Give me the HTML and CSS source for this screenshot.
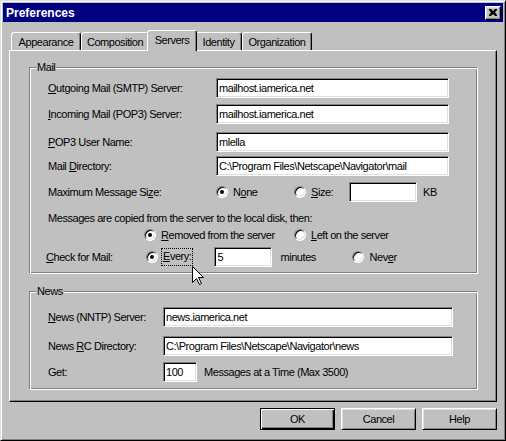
FILE: index.html
```html
<!DOCTYPE html>
<html>
<head>
<meta charset="utf-8">
<link rel="stylesheet" href="styles.css">
</head>
<body>
<div class="window">
  <div class="titlebar">
    <span class="title">Preferences</span>
    <span class="close"><svg width="8" height="7" viewBox="0 0 8 7"><path d="M0 0h2l2 2 2-2h2v1l-2 2.5 2 2.5v1h-2l-2-2-2 2h-2v-1l2-2.5-2-2.5z" fill="#000"/></svg></span>
  </div>
  <div class="content">
    <div class="tabs">
      <div class="tab t-app">Appearance</div>
      <div class="tab t-comp">Composition</div>
      <div class="tab t-serv sel">Servers</div>
      <div class="tab t-id">Identity</div>
      <div class="tab t-org">Organization</div>
    </div>
    <div class="panel">
      <div class="group mail">
        <div class="legend">Mail</div>
        <div class="row m1"><span class="label"><u>O</u>utgoing Mail (SMTP) Server:</span><span class="field w233">mailhost.iamerica.net</span></div>
        <div class="row m2"><span class="label"><u>I</u>ncoming Mail (POP3) Server:</span><span class="field w233">mailhost.iamerica.net</span></div>
        <div class="row m3"><span class="label"><u>P</u>OP3 User Name:</span><span class="field w233">mlella</span></div>
        <div class="row m4"><span class="label">Mail <u>D</u>irectory:</span><span class="field w233">C:\Program Files\Netscape\Navigator\mail</span></div>
        <div class="row m5">
          <span class="label">Maximum Message Si<u>z</u>e:</span>
          <span class="opt o-none"><span class="radio on"></span>N<u>o</u>ne</span>
          <span class="opt o-size"><span class="radio"></span><u>S</u>ize:</span>
          <span class="field w68"></span>
          <span class="kb">KB</span>
        </div>
        <div class="row m6 text">Messages are copied from the server to the local disk, then:</div>
        <div class="row m7 text">
          <span class="opt o-rem"><span class="radio on"></span><u>R</u>emoved from the server</span>
          <span class="opt"><span class="radio"></span><u>L</u>eft on the server</span>
        </div>
        <div class="row m8">
          <span class="label l-check"><u>C</u>heck for Mail:</span>
          <span class="opt"><span class="radio on r-every"></span><span class="focus"><u>E</u>very:</span></span>
          <span class="field w58 f-every">5</span>
          <span class="minutes">minutes</span>
          <span class="opt"><span class="radio"></span>Nev<u>e</u>r</span>
        </div>
      </div>
      <div class="group news">
        <div class="legend">News</div>
        <div class="row n1"><span class="nlabel"><u>N</u>ews (NNTP) Server:</span><span class="field w290">news.iamerica.net</span></div>
        <div class="row n2"><span class="nlabel">News <u>R</u>C Directory:</span><span class="field w290">C:\Program Files\Netscape\Navigator\news</span></div>
        <div class="row n3"><span class="nlabel">Get:</span><span class="field w34">100</span><span class="get-text">Messages at a Time (Max 3500)</span></div>
      </div>
    </div>
    <div class="buttons">
      <span class="btn default">OK</span>
      <span class="btn">Cancel</span>
      <span class="btn">Help</span>
    </div>
  </div>
  <svg class="cursor" width="13" height="20" viewBox="0 0 13 20"><path d="M0.5 0.5V16.5L4.5 12.5L7.5 18.5L9.5 17.5L6.5 11.5H11.5Z" fill="#fff" stroke="#000" stroke-width="1"/></svg>
</div>
</body>
</html>
```
FILE: styles.css
```css
* { box-sizing: border-box; }
body {
  margin: 0;
  font-family: "Liberation Sans", Arial, sans-serif;
  font-size: 11px;
  letter-spacing: -0.45px;
  color: #000;
}
.window {
  position: relative;
  width: 506px;
  height: 441px;
  background: #c0c0c0;
  border: 1px solid;
  border-color: #dfdfdf #000 #000 #dfdfdf;
  box-shadow: inset 1px 1px #fff, inset -1px -1px #808080;
  padding: 2px;
}
.titlebar {
  height: 19px;
  background: #000080;
  display: flex;
  align-items: center;
  justify-content: space-between;
  padding: 0 2px 0 3px;
}
.title {
  color: #fff;
  font-weight: bold;
  font-size: 12px;
  letter-spacing: 0;
}
.close {
  width: 16px;
  height: 14px;
  background: #c0c0c0;
  border: 1px solid;
  border-color: #fff #000 #000 #fff;
  box-shadow: inset -1px -1px #808080, inset 1px 1px #dfdfdf;
  display: flex;
  align-items: center;
  justify-content: center;
}
.close svg { display: block; }
.content { padding: 8px 6px 0 6px; }
.tabs {
  display: flex;
  align-items: flex-end;
  height: 20px;
  padding-left: 2px;
}
.tab {
  height: 18px;
  border: 1px solid;
  border-bottom: none;
  border-color: #fff #000 transparent #fff;
  border-radius: 3px 3px 0 0;
  box-shadow: inset -1px 0 #808080;
  display: flex;
  align-items: center;
  justify-content: center;
  background: #c0c0c0;
  white-space: nowrap;
}
.tab.sel {
  height: 21px;
  margin: 0 -2px -1px;
  position: relative;
  z-index: 1;
  padding-bottom: 2px;
}
.t-app { width: 70px; }
.t-comp { width: 68px; }
.t-serv { width: 50px; }
.t-id { width: 47px; }
.t-org { width: 70px; }
.panel {
  height: 352px;
  border: 1px solid;
  border-color: #fff #000 #000 #fff;
  box-shadow: inset -1px -1px #808080;
  padding: 16px 18px 0 19px;
}
.group {
  border: 1px solid;
  border-color: #808080 #fff #fff #808080;
  box-shadow: inset 1px 1px #fff, inset -1px -1px #808080;
  padding: 0 0 0 18px;
}
.mail { height: 207px; }
.news { height: 99px; margin-top: 17px; }
.legend {
  width: fit-content;
  margin: -7px 0 0 -12px;
  padding: 0 1px;
  line-height: 13px;
  background: #c0c0c0;
}
.row {
  display: flex;
  align-items: center;
  height: 20px;
  white-space: nowrap;
}
.row.text { height: 16px; }
.m1 { margin-top: 4px; }
.m2 { margin-top: 6px; }
.m3 { margin-top: 8px; }
.m4 { margin-top: 4px; }
.m5 { margin-top: 6px; }
.m6 { margin-top: 8px; }
.m7 { margin-top: 1px; padding-left: 96px; }
.m8 { margin-top: 4px; }
.n1 { margin-top: 9px; }
.n2 { margin-top: 9px; }
.n3 { margin-top: 6px; }
.label { width: 168px; }
.l-check { width: 100px; margin-left: -2px; }
.nlabel { width: 115px; }
.field {
  height: 20px;
  background: #fff;
  border: 1px solid;
  border-color: #808080 #fff #fff #808080;
  box-shadow: inset 1px 1px #000, inset -1px -1px #dfdfdf;
  padding: 0 2px;
  display: flex;
  align-items: center;
  white-space: nowrap;
  overflow: hidden;
}
.w233 { width: 233px; }
.w68 { width: 68px; }
.w58 { width: 58px; }
.w290 { width: 290px; }
.w34 { width: 34px; }
.opt {
  display: flex;
  align-items: center;
}
.o-none { width: 78px; }
.o-size { width: 55px; }
.o-rem { width: 150px; }
.radio {
  width: 12px;
  height: 12px;
  border-radius: 50%;
  background: #fff;
  border: 1px solid;
  border-color: #808080 #fff #fff #808080;
  box-shadow: inset 1px 1px #000, inset -1px -1px #dfdfdf;
  margin-right: 5px;
  display: flex;
  align-items: center;
  justify-content: center;
  flex: none;
}
.radio.on::after {
  content: "";
  width: 4px;
  height: 4px;
  border-radius: 50%;
  background: #000;
}
.r-every { margin-right: 3px; }
.focus {
  border: 1px dotted #000;
  padding: 1px 1px 2px;
  line-height: 13px;
}
.f-every { margin-left: 21px; }
.minutes { width: 72px; margin-left: 8px; }
.kb { margin-left: 6px; }
.get-text { margin-left: 7px; }
.buttons {
  display: flex;
  justify-content: flex-end;
  gap: 6px;
  margin-top: 6px;
}
.btn {
  width: 75px;
  height: 22px;
  border: 1px solid;
  border-color: #fff #000 #000 #fff;
  box-shadow: inset 1px 1px #dfdfdf, inset -1px -1px #808080;
  display: flex;
  align-items: center;
  justify-content: center;
}
.btn.default {
  border-color: #000;
  box-shadow: inset 1px 1px #fff, inset -1px -1px #000, inset -2px -2px #808080;
}
.cursor {
  position: absolute;
  left: 191px;
  top: 265px;
  display: block;
}
```
